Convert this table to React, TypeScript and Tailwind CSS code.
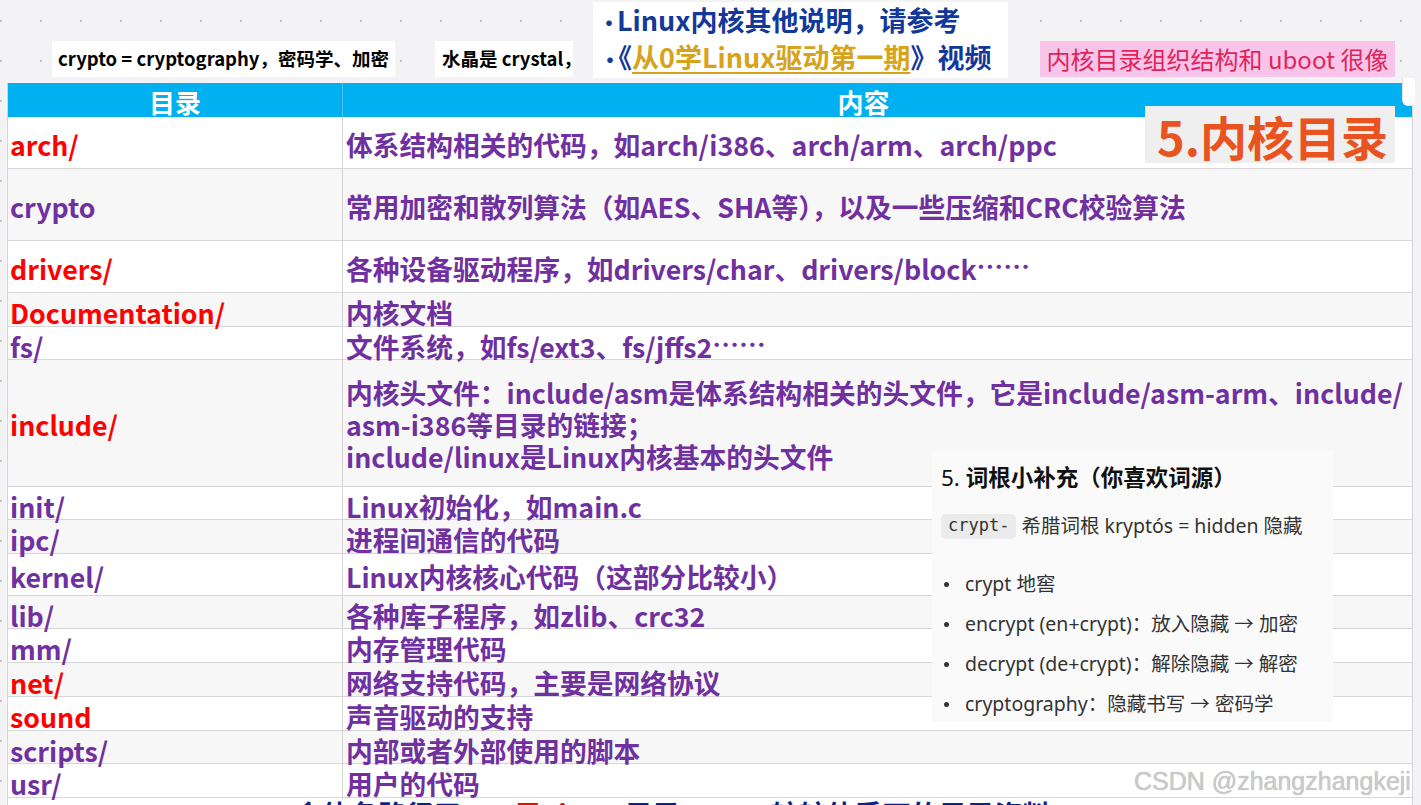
import React from "react";

type Row = { name: string; red: boolean; h: string; content: React.ReactNode; bg: string };

const Dots = () => <span className="inline-block -translate-y-[3px]">……</span>;

const rows: Row[] = [
  { name: "arch/", red: true, h: "h-[52px]", bg: "bg-white", content: "体系结构相关的代码，如arch/i386、arch/arm、arch/ppc" },
  { name: "crypto", red: false, h: "h-[72px]", bg: "bg-[#f7f7f7]", content: "常用加密和散列算法（如AES、SHA等），以及一些压缩和CRC校验算法" },
  {
    name: "drivers/",
    red: true,
    h: "h-[52px]",
    bg: "bg-white",
    content: (
      <span>
        各种设备驱动程序，如drivers/char、drivers/block<Dots />
      </span>
    ),
  },
  { name: "Documentation/", red: true, h: "h-[34px]", bg: "bg-[#f7f7f7]", content: "内核文档" },
  {
    name: "fs/",
    red: false,
    h: "h-[33px]",
    bg: "bg-white",
    content: (
      <span>
        文件系统，如fs/ext3、fs/jffs2<Dots />
      </span>
    ),
  },
  {
    name: "include/",
    red: true,
    h: "h-[127px]",
    bg: "bg-[#f7f7f7]",
    content: (
      <div className="flex flex-col">
        <span className="whitespace-nowrap">内核头文件：include/asm是体系结构相关的头文件，它是include/asm-arm、include/</span>
        <span className="whitespace-nowrap">asm-i386等目录的链接；</span>
        <span className="whitespace-nowrap">include/linux是Linux内核基本的头文件</span>
      </div>
    ),
  },
  { name: "init/", red: false, h: "h-[33px]", bg: "bg-white", content: "Linux初始化，如main.c" },
  { name: "ipc/", red: false, h: "h-[34px]", bg: "bg-[#f7f7f7]", content: "进程间通信的代码" },
  { name: "kernel/", red: false, h: "h-[42px]", bg: "bg-white", content: "Linux内核核心代码（这部分比较小）" },
  { name: "lib/", red: false, h: "h-[33px]", bg: "bg-[#f7f7f7]", content: "各种库子程序，如zlib、crc32" },
  { name: "mm/", red: false, h: "h-[34px]", bg: "bg-white", content: "内存管理代码" },
  { name: "net/", red: true, h: "h-[34px]", bg: "bg-[#f7f7f7]", content: "网络支持代码，主要是网络协议" },
  { name: "sound", red: true, h: "h-[34px]", bg: "bg-white", content: "声音驱动的支持" },
  { name: "scripts/", red: false, h: "h-[33px]", bg: "bg-[#f7f7f7]", content: "内部或者外部使用的脚本" },
  { name: "usr/", red: false, h: "h-[34px]", bg: "bg-white", content: "用户的代码" },
];

export default function App() {
  return (
    <div className="relative w-[1421px] h-[805px] overflow-hidden bg-[#f3f3f5] bg-[radial-gradient(circle,#c2c2c2_1.2px,transparent_1.6px)] bg-[length:40px_40px] bg-[position:-19px_1px] font-['Noto_Sans_CJK_SC',sans-serif]">
      {/* top annotation strip */}
      <div className="flex items-start h-[83px]">
        <div className="ml-[52px] mt-[41px] h-[36px] w-[343px] bg-white flex items-center justify-center whitespace-nowrap text-[18.5px] font-bold text-black">
          crypto = cryptography，密码学、加密
        </div>
        <div className="ml-[40px] mt-[41px] h-[36px] w-[138px] bg-white flex items-center pl-[7px] whitespace-nowrap overflow-hidden text-[18.5px] font-bold text-black">
          水晶是 crystal，
        </div>
        <div className="ml-[20px] mt-[2px] h-[76px] w-[415px] bg-white flex flex-col justify-start pl-[5px] text-[27px] leading-[36px] font-bold text-[#12399a] whitespace-nowrap">
          <div>
            <span className="inline-block w-[19px] text-[22px]">•</span>Linux内核其他说明，请参考
          </div>
          <div>
            <span className="inline-block w-[6px] text-[22px] ml-[1px]">•</span>《<span className="text-[#d6a31b] underline underline-offset-[4px] decoration-[2px]">从0学Linux驱动第一期</span>》视频
          </div>
        </div>
        <div className="ml-[32px] mt-[41px] h-[36px] w-[355px] bg-[#f8c4ea] flex items-center justify-center whitespace-nowrap text-[24px] text-[#e0245a]">
          内核目录组织结构和 uboot 很像
        </div>
      </div>

      {/* slide / table */}
      <div className="ml-[7px] w-[1406px] bg-white border-l border-r border-[#d6d6d6]">
        <div className="grid grid-cols-[335px_1fr] h-[34px] bg-[#00b0f0] overflow-hidden text-white font-bold text-[26px]">
          <div className="flex justify-center pt-[2px] leading-[34px] border-r border-[#4cc4f2]">目录</div>
          <div className="flex justify-center pt-[2px] leading-[34px] pr-[28px]">内容</div>
        </div>
        {rows.map((r) => (
          <div key={r.name} className={`grid grid-cols-[335px_1fr] ${r.h} ${r.bg} border-b border-[#d6d6d6] text-[26.75px] leading-[32px] font-bold`}>
            <div className={`flex items-center pt-[4px] pl-[2px] border-r border-[#d6d6d6] whitespace-nowrap ${r.red ? "text-[#ff0000]" : "text-[#7030a0]"}`}>
              {r.name}
            </div>
            <div className="flex items-center pt-[4px] pl-[3px] whitespace-nowrap text-[#7030a0]">{r.content}</div>
          </div>
        ))}
        <div className="h-[20px] overflow-hidden whitespace-nowrap pl-[286px] pt-[2px] text-[28px] leading-[28px] font-bold text-[#0d1f8c]">
          <span>会体各路径了：</span>
          <span className="ml-[24px] text-[#ff0000]">目Linux</span>
          <span> 目录：</span>
          <span className="text-[#ff0000]">arm</span>
          <span> 较较体系下的目录资料</span>
        </div>
      </div>

      {/* scrollbar corner artifact */}
      <div className="absolute left-[1402px] top-[78px] w-[13px] h-[28px] bg-white rounded-bl-[6px] border-l border-b border-[#e2e2e2]" />

      {/* 5.内核目录 label */}
      <div className="absolute left-[1145px] top-[106px] w-[250px] h-[57px] bg-[#efefef] flex items-center pl-[12px] pt-[2px] text-[47px] leading-none font-bold text-[#e8531f] whitespace-nowrap overflow-hidden">
        5.内核目录
      </div>

      {/* popup card */}
      <div className="absolute left-[932px] top-[450px] w-[401px] h-[272px] bg-[#fafafa] px-[9px] pt-[12px] font-['Noto_Sans','Noto_Sans_CJK_SC',sans-serif] text-[#333]">
        <div className="text-[22.5px] leading-[28px] text-[#111] whitespace-nowrap">
          <span>5. </span>
          <span className="font-bold font-['Noto_Sans_CJK_SC',sans-serif]">词根小补充（你喜欢词源）</span>
        </div>
        <div className="mt-[20px] flex items-center h-[28px] text-[19.5px] whitespace-nowrap">
          <span className="bg-[#ebebeb] rounded-[5px] px-[7px] h-[25px] flex items-center font-['DejaVu_Sans_Mono',monospace] text-[17px] text-[#333]">crypt-</span>
          <span className="ml-[5px]">希腊词根 kryptós = hidden 隐藏</span>
        </div>
        <div className="mt-[24px] flex flex-col text-[19.5px]">
          {[
            "crypt 地窖",
            "encrypt (en+crypt)：放入隐藏 → 加密",
            "decrypt (de+crypt)：解除隐藏 → 解密",
            "cryptography：隐藏书写 → 密码学",
          ].map((t) => (
            <div key={t} className="flex items-center h-[40px] whitespace-nowrap">
              <span className="ml-[3px] w-[5px] h-[5px] rounded-full bg-[#333]" />
              <span className="ml-[16px]">{t}</span>
            </div>
          ))}
        </div>
      </div>

      {/* watermark */}
      <div className="absolute left-[1134px] top-[765px] text-[25px] leading-[32px] text-[#cacaca] font-['Liberation_Sans',sans-serif] whitespace-nowrap [text-shadow:0_0_1px_#b0b0b0]">
        CSDN @zhangzhangkeji
      </div>
    </div>
  );
}
